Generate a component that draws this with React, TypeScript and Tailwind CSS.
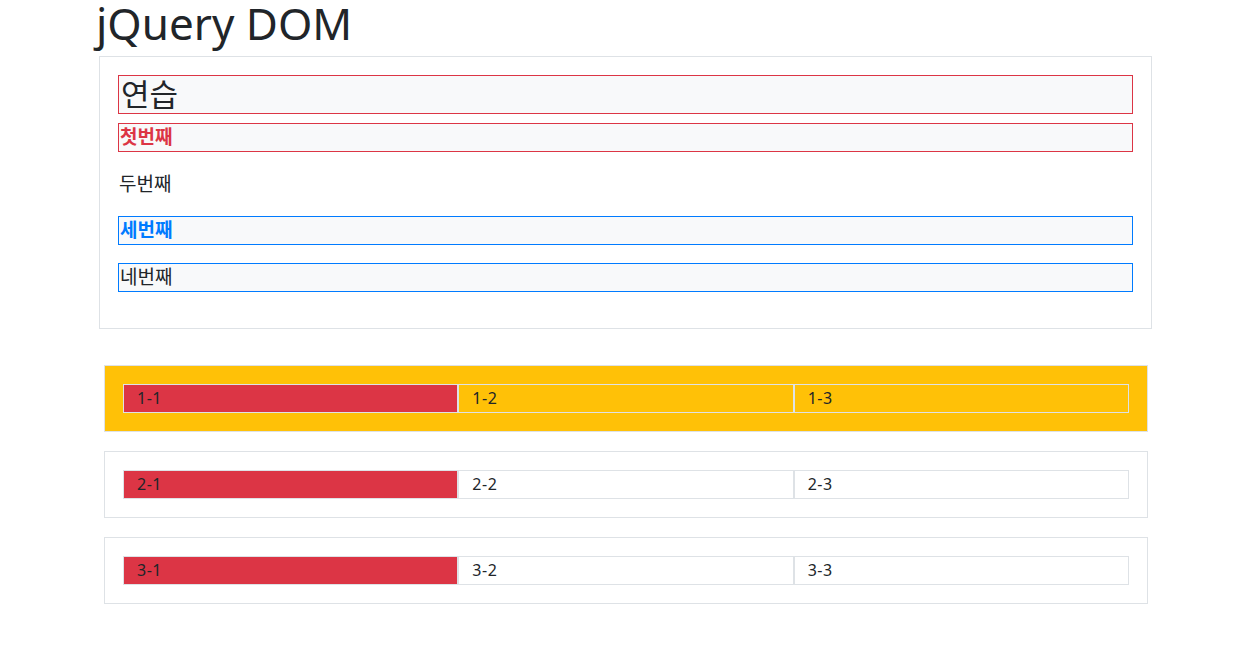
import React from "react";

const font = { fontFamily: '"Noto Sans", "Noto Sans CJK KR", sans-serif' };

function Row({ n, active }: { n: number; active?: boolean }) {
  return (
    <div
      className={`border border-[#dee2e6] p-[18px] ${active ? "bg-[#ffc107]" : "bg-white"}`}
    >
      <div className="flex">
        {[1, 2, 3].map((c) => (
          <div
            key={c}
            className={`flex-1 border border-[#dee2e6] pl-[13px] text-[16px] leading-[27px] tracking-[0.5px] text-[#212529] ${
              c === 1 ? "bg-[#dc3545]" : ""
            }`}
          >
            {n}-{c}
          </div>
        ))}
      </div>
    </div>
  );
}

export default function App() {
  return (
    <div className="min-h-[660px] w-[1253px] bg-white text-[#212529]" style={font}>
      <div className="ml-[99px] w-[1053px]">
        <h1 className="-ml-[3px] mb-[10px] text-[44px] font-normal leading-[46px] text-[#212529]">
          jQuery DOM
        </h1>
        <div className="border border-[#dee2e6] p-[18px]">
          <h3 className="mb-[9px] border border-[#dc3545] bg-[#f8f9fa] pl-[2px] text-[31px] font-normal leading-[37px]">
            연습
          </h3>
          <p className="mb-[18px] border border-[#dc3545] bg-[#f8f9fa] pl-[1px] text-[19px] font-bold leading-[27px] text-[#dc3545]">
            첫번째
          </p>
          <p className="mb-[18px] pl-[1px] text-[19px] leading-[28px]">두번째</p>
          <p className="mb-[18px] border border-[#007bff] bg-[#f8f9fa] pl-[1px] text-[19px] font-bold leading-[27px] text-[#007bff]">
            세번째
          </p>
          <p className="mb-[18px] border border-[#007bff] bg-[#f8f9fa] pl-[1px] text-[19px] leading-[27px]">
            네번째
          </p>
        </div>
        <div className="ml-[5px] mt-[36px] flex w-[1044px] flex-col gap-[19px]">
          <Row n={1} active />
          <Row n={2} />
          <Row n={3} />
        </div>
      </div>
    </div>
  );
}
